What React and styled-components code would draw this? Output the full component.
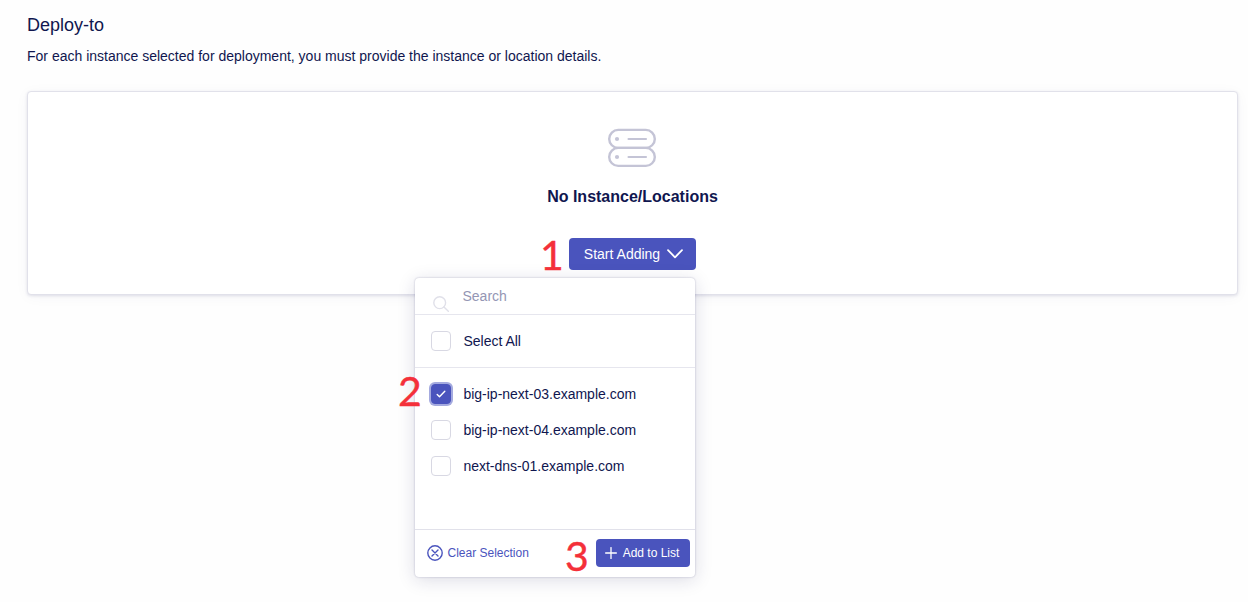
import React, { useState } from "react";
import styled, { createGlobalStyle, css } from "styled-components";

const GlobalStyle = createGlobalStyle`
  *, *::before, *::after { box-sizing: border-box; }
  body {
    margin: 0;
    background: #fefefe;
    color: #10164f;
    font-family: "Liberation Sans", Arial, sans-serif;
    font-size: 14px;
  }
  button, input { font-family: inherit; }
`;

const Page = styled.main`
  height: 602px;
  padding: 14px 10px 0 27px;
  overflow: hidden;
`;

const Title = styled.h1`
  margin: 0;
  font-size: 18px;
  font-weight: 400;
  line-height: 22px;
`;

const Description = styled.p`
  margin: 10px 0 25px;
  font-size: 14px;
  line-height: 20px;
`;

const Card = styled.section`
  display: flex;
  flex-direction: column;
  align-items: center;
  height: 204px;
  padding-top: 35px;
  background: #fff;
  border: 1px solid #e1e1ea;
  border-radius: 4px;
  box-shadow: 0 1px 3px rgba(30, 30, 90, 0.12), 0 2px 14px rgba(30, 30, 90, 0.04);
`;

const EmptyTitle = styled.h2`
  margin: 18px 0 31px;
  font-size: 16px;
  font-weight: 700;
  line-height: 20px;
`;

const Dropdown = styled.div`
  position: relative;
`;

const Button = styled.button`
  display: flex;
  align-items: center;
  justify-content: center;
  gap: ${(p) => (p.$small ? 6 : 7)}px;
  width: ${(p) => (p.$small ? 94 : 127)}px;
  height: ${(p) => (p.$small ? 28 : 32)}px;
  padding: ${(p) => (p.$small ? "0 2px 0 0" : "0 0 0 2px")};
  border: 0;
  border-radius: 4px;
  background: #4a54bd;
  color: #fff;
  font-size: ${(p) => (p.$small ? 12 : 14)}px;
`;

const Menu = styled.div`
  position: absolute;
  top: 40px;
  left: -154px;
  display: flex;
  flex-direction: column;
  width: 280px;
  height: 299px;
  background: #fff;
  border-radius: 4px;
  box-shadow: 0 0 2px rgba(30, 30, 90, 0.3), 0 3px 18px rgba(30, 30, 90, 0.15);
`;

const SearchRow = styled.div`
  display: flex;
  align-items: flex-start;
  gap: 13.5px;
  height: 37px;
  padding: 8px 16px 0 18px;
  border-bottom: 1px solid #e6e6ee;

  svg { margin-top: 10px; flex: none; }
`;

const SearchInput = styled.input`
  width: 200px;
  height: 20px;
  padding: 0;
  border: 0;
  outline: 0;
  background: transparent;
  color: #10164f;
  font-size: 14px;

  &::placeholder { color: #9496b4; opacity: 1; }
`;

const SelectAll = styled.div`
  display: flex;
  align-items: center;
  height: 53px;
  padding-left: 16px;
  border-bottom: 1px solid #e6e6ee;
`;

const Options = styled.div`
  flex: 1;
  padding: 8px 0 0 16px;
`;

const OptionLabel = styled.label`
  display: flex;
  align-items: center;
  gap: 12.4px;
  height: 36px;
  font-size: 14px;
  white-space: nowrap;
`;

const Box = styled.span`
  display: grid;
  place-items: center;
  width: 20px;
  height: 20px;
  border: 1px solid #d8d8e3;
  border-radius: 4px;
  background: #fff;

  ${(p) =>
    p.$checked &&
    css`
      border-color: #4a54bd;
      background: #4a54bd;
      box-shadow: 0 0 0 2px #a4aadf;
    `}
`;

const HiddenCheck = styled.input`
  position: absolute;
  opacity: 0;
  pointer-events: none;
`;

const Footer = styled.footer`
  display: flex;
  align-items: center;
  justify-content: space-between;
  height: 48px;
  padding: 0 5px 2px 12px;
  border-top: 1px solid #e1e1ea;
`;

const ClearButton = styled.button`
  display: flex;
  align-items: center;
  gap: 4.5px;
  padding: 0;
  border: 0;
  background: none;
  color: #4a54bd;
  font-size: 12px;
`;

const Step = styled.span`
  position: absolute;
  left: ${(p) => p.$x}px;
  top: ${(p) => p.$y}px;
  color: #f4303a;
  font-family: Lato, sans-serif;
  font-size: 41px;
  line-height: 40px;
  -webkit-text-stroke: 0.4px #f4303a;
`;

const ServersIcon = () => (
  <svg width="52" height="42" viewBox="0 0 52 42" fill="none" stroke="#c4c4d6" strokeWidth="2.4" strokeLinecap="round">
    <rect x="2.2" y="2.9" width="45.6" height="18" rx="9" />
    <rect x="2.2" y="20.9" width="45.6" height="18" rx="9" />
    <path d="M21.5 12h17.5M21.5 30h17.5" strokeWidth="2.1" />
    <circle cx="10" cy="12" r="2.1" fill="#c4c4d6" stroke="none" />
    <circle cx="10" cy="30" r="2.1" fill="#c4c4d6" stroke="none" />
  </svg>
);

const ChevronIcon = () => (
  <svg width="16" height="10" viewBox="0 0 16 10" fill="none" stroke="#fff" strokeWidth="1.8" strokeLinecap="round" strokeLinejoin="round">
    <path d="M1 1.2 8 8.3l7-7.1" />
  </svg>
);

const SearchIcon = () => (
  <svg width="16" height="16" viewBox="0 0 16 16" fill="none" stroke="#e0e0e9" strokeWidth="1.4" strokeLinecap="round">
    <circle cx="6.7" cy="6.7" r="5.9" />
    <path d="m11 11 4.3 4.3" />
  </svg>
);

const CheckIcon = () => (
  <svg width="10" height="8" viewBox="0 0 10 8" fill="none" stroke="#fff" strokeWidth="1.4" strokeLinecap="round" strokeLinejoin="round">
    <path d="m1.2 4.4 2.3 2.3L8.8 1.2" />
  </svg>
);

const ClearIcon = () => (
  <svg width="16" height="16" viewBox="0 0 16 16" fill="none" stroke="#4a54bd" strokeWidth="1.4" strokeLinecap="round">
    <circle cx="8" cy="8" r="7.2" />
    <path d="m5 5 6 6M11 5l-6 6" />
  </svg>
);

const PlusIcon = () => (
  <svg width="12" height="12" viewBox="0 0 12 12" fill="none" stroke="#fff" strokeWidth="1.3" strokeLinecap="round">
    <path d="M6 .6v10.8M.6 6h10.8" />
  </svg>
);

const instances = ["big-ip-next-03.example.com", "big-ip-next-04.example.com", "next-dns-01.example.com"];

function Option({ label, checked, onChange }) {
  return (
    <OptionLabel>
      <HiddenCheck type="checkbox" checked={checked} onChange={onChange} />
      <Box $checked={checked}>{checked && <CheckIcon />}</Box>
      {label}
    </OptionLabel>
  );
}

export default function App() {
  const [selected, setSelected] = useState([instances[0]]);
  const all = selected.length === instances.length;
  const toggle = (name) =>
    setSelected((list) => (list.includes(name) ? list.filter((n) => n !== name) : [...list, name]));

  return (
    <Page>
      <GlobalStyle />
      <Title>Deploy-to</Title>
      <Description>
        For each instance selected for deployment, you must provide the instance or location details.
      </Description>
      <Card>
        <ServersIcon />
        <EmptyTitle>No Instance/Locations</EmptyTitle>
        <Dropdown>
          <Button>
            Start Adding
            <ChevronIcon />
          </Button>
          <Menu>
            <SearchRow>
              <SearchIcon />
              <SearchInput placeholder="Search" />
            </SearchRow>
            <SelectAll>
              <Option label="Select All" checked={all} onChange={() => setSelected(all ? [] : instances)} />
            </SelectAll>
            <Options>
              {instances.map((name) => (
                <Option key={name} label={name} checked={selected.includes(name)} onChange={() => toggle(name)} />
              ))}
            </Options>
            <Footer>
              <ClearButton onClick={() => setSelected([])}>
                <ClearIcon />
                Clear Selection
              </ClearButton>
              <Button $small>
                <PlusIcon />
                Add to List
              </Button>
            </Footer>
          </Menu>
          <Step $x={-29} $y={-3}>1</Step>
          <Step $x={-171} $y={133}>2</Step>
          <Step $x={-4} $y={298}>3</Step>
        </Dropdown>
      </Card>
    </Page>
  );
}
